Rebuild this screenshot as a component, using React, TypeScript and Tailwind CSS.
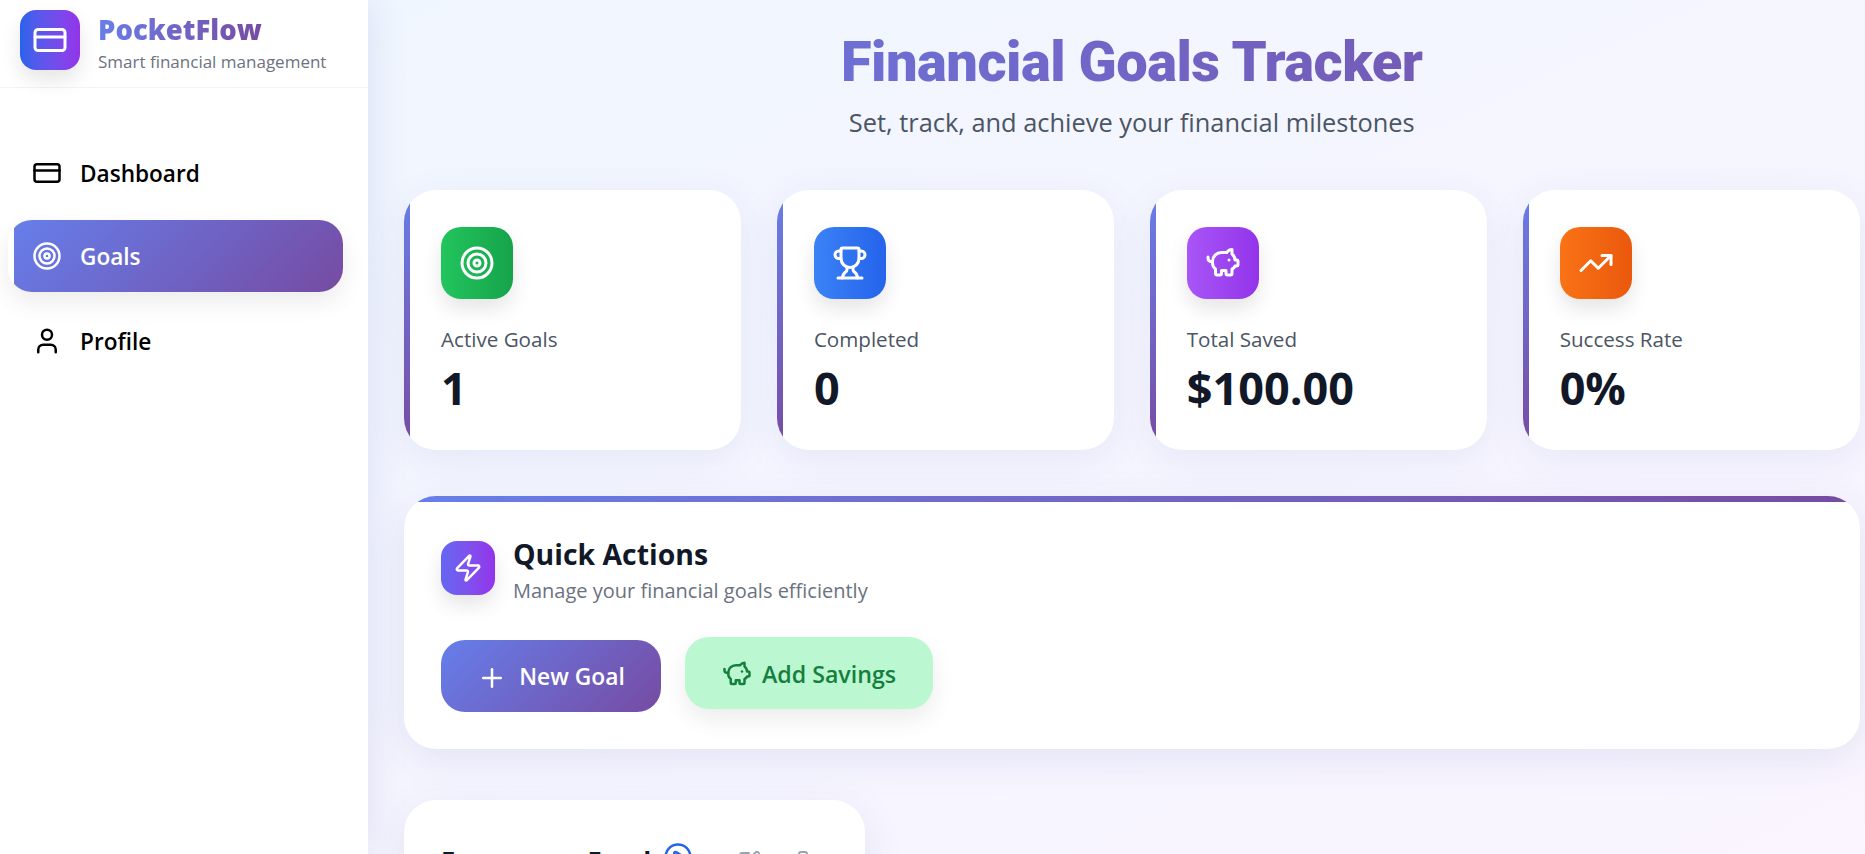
import { CreditCard, Target, User, Trophy, PiggyBank, TrendingUp, Zap, Plus, CirclePlay, SquarePen, Trash2 } from "lucide-react";

const stats = [
  { label: "Active Goals", value: "1", icon: <Target size={36} />, box: "from-[#22c55e] to-[#16a34a]" },
  { label: "Completed", value: "0", icon: <Trophy size={36} />, box: "from-[#3b82f6] to-[#2563eb]" },
  { label: "Total Saved", value: "$100.00", icon: <PiggyBank size={36} />, box: "from-[#a855f7] to-[#9333ea]" },
  { label: "Success Rate", value: "0%", icon: <TrendingUp size={36} />, box: "from-[#f97316] to-[#ea580c]" },
];

function Sidebar() {
  return (
    <aside className="w-[368px] shrink-0 bg-white h-full shadow-[0_0_40px_rgba(40,60,140,0.12)] z-10">
      <div className="h-[88px] border-b border-gray-100 pl-5 pt-[10px] flex items-start gap-[19px]">
        <div className="w-[60px] h-[60px] rounded-2xl bg-gradient-to-r from-[#2563eb] to-[#9333ea] flex items-center justify-center text-white shadow-[0_10px_20px_rgba(0,0,0,0.1)]">
          <CreditCard size={36} />
        </div>
        <div className="mt-[3px]">
          <div className="text-[27.5px] leading-[34px] font-extrabold bg-gradient-to-r from-[#667eea] to-[#764ba2] bg-clip-text text-transparent w-fit -ml-px">PocketFlow</div>
          <div className="mt-[3px] text-[17px] leading-6 text-[#6b7280] -ml-px">Smart financial management</div>
        </div>
      </div>
      <nav className="pt-[49px] flex flex-col gap-3">
        <div className="h-[72px] flex items-center pl-[32px] gap-[18px] text-black text-[22.6px] font-[560]">
          <CreditCard size={30} />
          <span className="pt-[2px]">Dashboard</span>
        </div>
        <div className="h-[72px] ml-2 mr-[25px] rounded-3xl overflow-hidden bg-white shadow-[0_10px_25px_rgba(0,0,0,0.08)] flex -mt-px">
          <div className="flex-1 ml-[6px] bg-[linear-gradient(135deg,#667eea,#764ba2)] flex items-center pl-[18px] gap-[18px] text-white text-[22.6px] font-[560]">
            <Target size={30} />
            <span className="pt-[2px]">Goals</span>
          </div>
        </div>
        <div className="h-[72px] mt-[1px] flex items-center pl-[32px] gap-[18px] text-black text-[22.6px] font-[560]">
          <User size={30} />
          <span className="pt-[2px]">Profile</span>
        </div>
      </nav>
    </aside>
  );
}

function StatCard({ label, value, icon, box }: (typeof stats)[number]) {
  return (
    <div className="relative overflow-hidden bg-white rounded-[32px] h-[260px] pl-[37px] pt-[37px] shadow-[0_10px_40px_rgba(50,70,150,0.08)]">
      <div className="absolute left-0 top-0 bottom-0 w-[6px] bg-gradient-to-b from-[#667eea] to-[#764ba2]" />
      <div className={`w-[72px] h-[72px] rounded-[20px] bg-gradient-to-r flex items-center justify-center text-white shadow-[0_10px_20px_rgba(0,0,0,0.1)] ${box}`}>
        {icon}
      </div>
      <div className="mt-[26px] text-[20.6px] leading-7 font-medium text-[#4b5563]">{label}</div>
      <div className="mt-[3px] text-[45px] leading-[64px] font-bold text-[#111827]">{value}</div>
    </div>
  );
}

export default function App() {
  return (
    <div className="flex h-screen overflow-hidden font-['Open_Sans',sans-serif] bg-gradient-to-br from-[#eff6ff] to-[#faf5ff]">
      <Sidebar />
      <main className="flex-1 min-w-0 pl-9 pr-[5.5px] overflow-hidden">
        <div className="pt-[27px] text-center pb-[52px]">
          <h1 className="font-['Roboto',sans-serif] text-[56px] leading-[70px] font-black tracking-[-0.5px] bg-gradient-to-r from-[#667eea] to-[#764ba2] bg-clip-text text-transparent">Financial Goals Tracker</h1>
          <p className="mt-[9px] text-[25.4px] leading-8 text-[#4b5563]">Set, track, and achieve your financial milestones</p>
        </div>
        <div className="grid grid-cols-4 gap-9">
          {stats.map((s) => (
            <StatCard key={s.label} {...s} />
          ))}
        </div>
        <section className="relative overflow-hidden mt-[46px] h-[253px] bg-white rounded-[32px] pl-[37px] pt-[45px] shadow-[0_10px_40px_rgba(50,70,150,0.1)]">
          <div className="absolute left-0 right-0 top-0 h-[6px] bg-gradient-to-r from-[#667eea] to-[#764ba2]" />
          <div className="flex gap-[18px]">
            <div className="w-[54px] h-[54px] rounded-2xl bg-gradient-to-r from-[#6366f1] to-[#9333ea] flex items-center justify-center text-white shadow-[0_10px_20px_rgba(0,0,0,0.1)]">
              <Zap size={30} />
            </div>
            <div className="-mt-[3px]">
              <div className="text-[28.4px] leading-8 font-bold text-[#111827]">Quick Actions</div>
              <div className="mt-[7px] text-[20px] leading-7 text-[#6b7280]">Manage your financial goals efficiently</div>
            </div>
          </div>
          <div className="mt-[35px] flex gap-6 items-start">
            <button className="w-[220px] h-[72px] pt-[3px] rounded-3xl bg-[linear-gradient(135deg,#667eea,#764ba2)] text-white flex items-center justify-center gap-[12px] text-[22.8px] font-semibold">
              <Plus size={30} />
              New Goal
            </button>
            <button className="-mt-[3px] w-[248px] h-[72px] pt-[2px] rounded-3xl bg-[#bbf7d0] text-[#15803d] flex items-center justify-center gap-[10px] text-[23.2px] font-[560] shadow-[0_10px_25px_rgba(0,0,0,0.08)]">
              <PiggyBank size={30} />
              Add Savings
            </button>
          </div>
        </section>
        <section className="mt-[51px] w-[461px] h-[300px] bg-white rounded-[32px] pl-[37px] pt-[42px] shadow-[0_10px_40px_rgba(50,70,150,0.1)]">
          <div className="flex items-start">
            <span className="w-[222px] mt-[2px] text-[25.5px] leading-8 font-bold text-[#111827]">Emergency Fund</span>
            <CirclePlay size={30} className="text-[#2563eb]" />
            <SquarePen size={24} className="ml-[44px] mt-[8px] text-[#9ca3af]" />
            <Trash2 size={24} className="ml-[30px] mt-[8px] text-[#9ca3af]" />
          </div>
        </section>
      </main>
    </div>
  );
}
